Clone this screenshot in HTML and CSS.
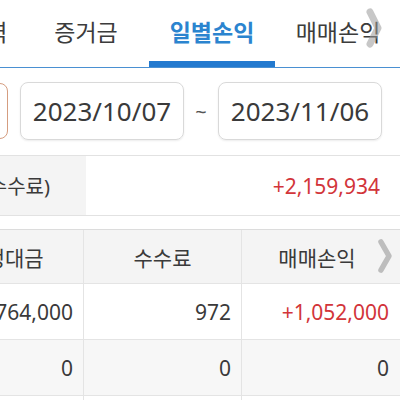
FILE: index.html
```html
<!DOCTYPE html>
<html lang="ko">
<head>
<meta charset="utf-8">
<link rel="stylesheet" href="styles.css">
</head>
<body>
<div class="screen">
  <nav class="tabs">
    <div class="tab first">체결내역</div>
    <div class="tab">증거금</div>
    <div class="tab active">일별손익</div>
    <div class="tab">매매손익</div>
    <svg class="tab-more" width="18" height="42" viewBox="0 0 18 42"><polyline points="5,5 13,21 5,37" fill="none" stroke="#9a9a9a" stroke-width="7" stroke-linecap="round" stroke-linejoin="round"/></svg>
  </nav>

  <div class="dates">
    <div class="period"></div>
    <div class="datebox">2023/10/07</div>
    <div class="tilde">~</div>
    <div class="datebox">2023/11/06</div>
  </div>

  <div class="summary">
    <div class="sum-label"><span>손익합계(세금+수수료)</span></div>
    <div class="sum-value">+2,159,934</div>
  </div>

  <div class="table">
    <div class="row head">
      <div class="cell">약정대금</div>
      <div class="cell">수수료</div>
      <div class="cell">매매손익</div>
    </div>
    <div class="row">
      <div class="cell">1,764,000</div>
      <div class="cell">972</div>
      <div class="cell red">+1,052,000</div>
    </div>
    <div class="row alt">
      <div class="cell">0</div>
      <div class="cell">0</div>
      <div class="cell">0</div>
    </div>
    <div class="row">
      <div class="cell"></div>
      <div class="cell"></div>
      <div class="cell"></div>
    </div>
    <svg class="head-more" width="16" height="36" viewBox="0 0 16 36"><polyline points="4,4 12,18 4,32" fill="none" stroke="#bdbdbd" stroke-width="5.5" stroke-linecap="round" stroke-linejoin="round"/></svg>
  </div>
</div>
</body>
</html>
```

FILE: styles.css
```css
html, body {
  margin: 0;
  padding: 0;
  background: #ffffff;
}
body {
  width: 400px;
  height: 400px;
  overflow: hidden;
  font-family: "Noto Sans", "Noto Sans CJK KR", sans-serif;
  color: #3a3a3a;
}
.screen {
  width: 400px;
  overflow: hidden;
}

/* tabs */
.tabs {
  position: relative;
  display: flex;
  height: 67px;
  margin-left: -103px;
  border-bottom: 1.5px solid #4a90d2;
}
.tab {
  flex: 0 0 126px;
  height: 61px;
  display: flex;
  align-items: center;
  justify-content: center;
  font-size: 23px;
  color: #3c3c3c;
  border-bottom: 6px solid transparent;
  white-space: nowrap;
  box-sizing: content-box;
}
.tab.first {
  flex-basis: 116px;
  padding-left: 10px;
}
.tab.active {
  color: #2b84cf;
  font-weight: 700;
  border-bottom-color: #2279cf;
}
.tab-more {
  position: absolute;
  right: 17px;
  top: 7px;
  opacity: 0.55;
}

/* date row */
.dates {
  display: flex;
  align-items: center;
  margin-top: 14px;
  margin-left: -92px;
}
.period {
  flex: 0 0 100px;
  height: 56px;
  box-sizing: border-box;
  border: 1.5px solid #d59d80;
  border-radius: 8px;
  margin-right: 12px;
}
.datebox {
  flex: 0 0 164px;
  height: 58px;
  box-sizing: border-box;
  border: 1px solid #d9d9d9;
  border-radius: 8px;
  box-shadow: 0 1px 2px rgba(0,0,0,0.08);
  display: flex;
  align-items: center;
  justify-content: center;
  font-size: 26px;
  color: #3a3a3a;
}
.tilde {
  flex: 0 0 34px;
  text-align: center;
  font-size: 20px;
  color: #555;
}

/* summary */
.summary {
  display: flex;
  height: 59px;
  margin-top: 15px;
  border-top: 1px solid #e2e2e2;
  border-bottom: 1px solid #e2e2e2;
}
.sum-label {
  flex: 0 0 86px;
  background: #f4f4f4;
  display: flex;
  align-items: center;
  justify-content: flex-end;
  padding-right: 36px;
  box-sizing: border-box;
  font-size: 20px;
  white-space: nowrap;
  overflow: hidden;
}
.sum-label span { flex: none; }
.sum-value {
  flex: 1;
  display: flex;
  align-items: center;
  justify-content: flex-end;
  padding-right: 20px;
  font-size: 21px;
  color: #d2353a;
}

/* table */
.table {
  position: relative;
  margin-top: 13px;
  margin-left: -73px;
  border-top: 1px solid #dcdcdc;
}
.row {
  display: grid;
  grid-template-columns: 157px 158px 158px;
  height: 55px;
  border-bottom: 1px solid #e4e4e4;
}
.row.head {
  height: 53px;
  background: #f4f4f4;
}
.row.alt { background: #f7f7f7; }
.cell {
  display: flex;
  align-items: center;
  justify-content: flex-end;
  padding-right: 10px;
  font-size: 21px;
  color: #3a3a3a;
  border-right: 1px solid #e4e4e4;
  white-space: nowrap;
}
.cell:last-child { border-right: none; padding-right: 11px; }
.head .cell {
  justify-content: center;
  padding-right: 0;
  font-size: 21px;
}
.head .cell:last-child { padding-right: 8px; }
.cell.red { color: #d2353a; }
.head-more {
  position: absolute;
  right: 7px;
  top: 8px;
}
```
